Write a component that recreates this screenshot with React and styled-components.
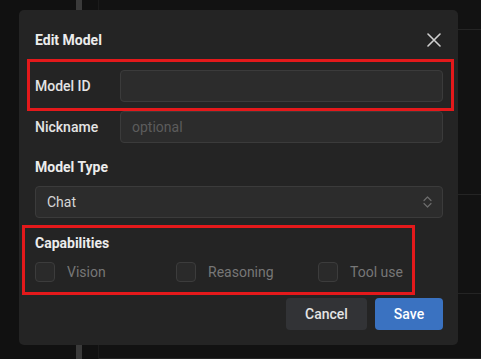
import React, { useState } from "react";
import styled, { createGlobalStyle } from "styled-components";

const GlobalStyle = createGlobalStyle`
  html, body {
    margin: 0;
    padding: 0;
    background: #111111;
    font-family: Roboto, "Noto Sans", sans-serif;
  }
  * { box-sizing: border-box; }
`;

function CloseIcon() {
  return (
    <svg width="14" height="14" viewBox="0 0 14 14">
      <path d="M1 1L13 13M13 1L1 13" stroke="#cfcfcf" strokeWidth="1.6" strokeLinecap="round" />
    </svg>
  );
}

function UpDownIcon() {
  return (
    <svg width="9" height="12" viewBox="0 0 9 12">
      <path d="M1 4.5L4.5 1L8 4.5M1 7.5L4.5 11L8 7.5" stroke="#6c6c6c" strokeWidth="1.2" fill="none" strokeLinecap="round" strokeLinejoin="round" />
    </svg>
  );
}

const capabilities = ["Vision", "Reasoning", "Tool use"];

function App() {
  const [checked, setChecked] = useState({});
  const toggle = (name) => setChecked({ ...checked, [name]: !checked[name] });

  return (
    <>
      <GlobalStyle />
      <Page>
        <SidePane />
        <ScrollBar />
        <Gutter />
        <MainPane>
          <Block h={30} />
          <Block h={165} />
          <Block h={99} />
          <Block h={65} />
        </MainPane>
      </Page>
      <Dialog>
        <Header>
          <Title>Edit Model</Title>
          <CloseButton>
            <CloseIcon />
          </CloseButton>
        </Header>
        <Form>
          <Rows>
            <Row $mark>
              <RowLabel>Model ID</RowLabel>
              <Input />
            </Row>
            <Row>
              <RowLabel>Nickname</RowLabel>
              <Input placeholder="optional" />
            </Row>
          </Rows>
          <Field>
            <FieldLabel>Model Type</FieldLabel>
            <Select>
              <span>Chat</span>
              <UpDownIcon />
            </Select>
          </Field>
          <Field $mark>
            <FieldLabel>Capabilities</FieldLabel>
            <Checks>
              {capabilities.map((c) => (
                <CheckItem key={c} onClick={() => toggle(c)}>
                  <Box $on={checked[c]} />
                  <span>{c}</span>
                </CheckItem>
              ))}
            </Checks>
          </Field>
        </Form>
        <Footer>
          <Button $w={81}>Cancel</Button>
          <Button $w={68} $primary>Save</Button>
        </Footer>
      </Dialog>
    </>
  );
}

const Page = styled.div`
  display: flex;
  height: 359px;
  overflow: hidden;
`;

const SidePane = styled.div`
  width: 76px;
  background: #111111;
`;

const ScrollBar = styled.div`
  width: 6px;
  background: #3a3a3a;
`;

const Gutter = styled.div`
  width: 17px;
  background: #111111;
  border-right: 1px solid #1b1b1b;
`;

const MainPane = styled.div`
  flex: 1;
  display: flex;
  flex-direction: column;
  background: #121212;
`;

const Block = styled.div`
  height: ${(p) => p.h}px;
  flex-shrink: 0;
  border-bottom: 1px solid #242424;
`;

const Dialog = styled.div`
  position: absolute;
  left: 19px;
  top: 10px;
  width: 439px;
  height: 335px;
  background: #242424;
  border-radius: 5px;
  padding: 16px 15px 15px 16px;
  display: flex;
  flex-direction: column;
  color: #e6e6e6;
`;

const Header = styled.div`
  height: 28px;
  display: flex;
  align-items: center;
  justify-content: space-between;
`;

const Title = styled.h2`
  margin: 0;
  font-size: 14px;
  font-weight: 700;
  color: #ececec;
`;

const CloseButton = styled.button`
  border: none;
  background: none;
  padding: 0;
  margin-right: 2px;
  display: flex;
  cursor: pointer;
`;

const Form = styled.div`
  margin-top: 16px;
  display: flex;
  flex-direction: column;
  gap: 14px;
`;

const Rows = styled.div`
  display: flex;
  flex-direction: column;
  gap: 9px;
`;

const Mark = `
  &::after {
    content: "";
    position: absolute;
    border: 3px solid #e4191b;
    pointer-events: none;
  }
`;

const Row = styled.div`
  position: relative;
  display: grid;
  grid-template-columns: 85px 1fr;
  align-items: center;
  ${(p) => p.$mark && Mark}
  &::after {
    inset: -11px -11px -9px -8px;
  }
`;

const RowLabel = styled.label`
  font-size: 14px;
  font-weight: 500;
  color: #e4e4e4;
`;

const Input = styled.input`
  height: 32px;
  width: 100%;
  background: #2c2c2c;
  border: 1px solid #3b3b3b;
  border-radius: 4px;
  padding: 0 11px;
  font: 400 14px Roboto, sans-serif;
  color: #ddd;
  outline: none;
  &::placeholder {
    color: #5c5c5c;
  }
`;

const Field = styled.div`
  position: relative;
  display: flex;
  flex-direction: column;
  gap: 9px;
  align-self: ${(p) => (p.$mark ? "flex-start" : "stretch")};
  margin-top: ${(p) => (p.$mark ? "1px" : "0")};
  ${(p) => p.$mark && Mark}
  &::after {
    inset: -8px -12px -13px -13px;
  }
`;

const FieldLabel = styled.div`
  font-size: 14px;
  line-height: 20px;
  font-weight: 700;
  color: #ececec;
`;

const Select = styled.div`
  height: 32px;
  background: #2c2c2c;
  border: 1px solid #3b3b3b;
  border-radius: 4px;
  padding: 0 10px 0 11px;
  display: flex;
  align-items: center;
  justify-content: space-between;
  font-size: 14px;
  color: #d6d6d6;
`;

const Checks = styled.div`
  display: grid;
  grid-template-columns: 141px 142px auto;
`;

const CheckItem = styled.label`
  display: flex;
  align-items: center;
  gap: 12px;
  font-size: 14px;
  color: #777777;
  cursor: pointer;
`;

const Box = styled.span`
  width: 20px;
  height: 20px;
  border-radius: 4px;
  border: 1px solid #3c3c3c;
  background: ${(p) => (p.$on ? "#3a72c1" : "#2a2a2a")};
`;

const Footer = styled.div`
  margin-top: auto;
  display: flex;
  justify-content: flex-end;
  gap: 8px;
`;

const Button = styled.button`
  height: 32px;
  width: ${(p) => p.$w}px;
  padding: 0;
  border: none;
  border-radius: 4px;
  background: ${(p) => (p.$primary ? "#3a72c1" : "#323336")};
  color: ${(p) => (p.$primary ? "#ffffff" : "#e4e4e4")};
  font: 500 14px Roboto, sans-serif;
  cursor: pointer;
`;

export default App;
